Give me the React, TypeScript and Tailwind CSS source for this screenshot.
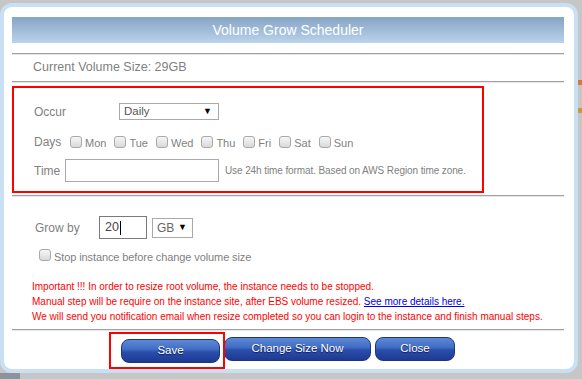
import React from "react";

const days = ["Mon", "Tue", "Wed", "Thu", "Fri", "Sat", "Sun"];

const notes = [
  "Important !!! In order to resize root volume, the instance needs to be stopped.",
  "Manual step will be require on the instance site, after EBS volume resized.",
  "We will send you notification email when resize completed so you can login to the instance and finish manual steps.",
];

function Check() {
  return (
    <span className="inline-block h-[12px] w-[12px] shrink-0 rounded-[3px] border border-[#a9a9a9] bg-linear-to-b from-[#f6f6f6] to-[#d9d9d9]" />
  );
}

function Rule() {
  return <div className="h-px bg-[#a2a2a2] shadow-[0_1px_0_#e6e6e6]" />;
}

function BlueButton({ label, width }: { label: string; width: string }) {
  return (
    <button
      className={`${width} h-[24px] rounded-[8px] border border-[#1b3586] bg-[linear-gradient(to_bottom,#5e89d5_0%,#416dc4_42%,#2b4dac_55%,#1d3a92_100%)] text-[11.5px] text-white [text-shadow:0_1px_1px_#0c1d4d]`}
    >
      {label}
    </button>
  );
}

export default function App() {
  return (
    <div className="relative h-[379px] w-[582px] overflow-hidden bg-[#c6c6c6] pt-[3px] font-['Liberation_Sans',sans-serif]">
      {/* bits of the page behind the dialog */}
      <div className="absolute right-0 top-[80px] h-[5px] w-[4px] bg-[#d8773b]" />
      <div className="absolute right-0 top-[108px] h-[5px] w-[4px] bg-[#c99a3d]" />
      <div className="absolute bottom-0 left-0 h-[6px] w-[20px] bg-[#8d939b]" />

      <div className="h-[370px] w-[578px] overflow-hidden rounded-[12px] border-[4px] border-[#c9dff3] bg-white pl-[8px] pr-[10px] pt-[10px]">
        <div className="flex h-[26px] items-center justify-center bg-linear-to-b from-[#86a4c5] to-[#bbd3eb] text-[14px] text-white">
          Volume Grow Scheduler
        </div>

        <div className="mt-[10px]">
          <Rule />
        </div>
        <div className="flex h-[27px] items-center pl-[21px] text-[12.5px] text-[#7f7f7f]">
          Current Volume Size: 29GB
        </div>
        <Rule />

        <div className="mt-[4px] h-[107px] w-[472px] border-2 border-[#ff0000] pl-[20px] pt-[15px] text-[12px] text-[#7f7f7f]">
          <div className="flex h-[17px] items-center">
            <span className="w-[85px]">Occur</span>
            <div className="flex h-[17px] w-[100px] items-center justify-between border border-[#a9a9a9] pl-[4px] pr-[6px] text-[11.5px] text-[#555]">
              <span>Daily</span>
              <span className="text-[9px] text-black">▼</span>
            </div>
          </div>

          <div className="mt-[13px] flex h-[17px] items-center">
            <span className="w-[36px]">Days</span>
            <div className="flex items-center gap-[8px] text-[11px]">
              {days.map((d) => (
                <label key={d} className="flex items-center gap-[3px]">
                  <Check />
                  <span className="pt-[3px]">{d}</span>
                </label>
              ))}
            </div>
          </div>

          <div className="mt-[9px] flex h-[23px] items-center">
            <span className="w-[31px]">Time</span>
            <div className="h-[23px] w-[154px] border border-[#a9a9a9]" />
            <span className="ml-[6px] whitespace-nowrap text-[10px] tracking-[-0.1px]">
              Use 24h time format. Based on AWS Region time zone.
            </span>
          </div>
        </div>

        <div className="mt-[2px]">
          <Rule />
        </div>

        <div className="mt-[20px] flex h-[23px] items-center pl-[23px] text-[12px] text-[#7f7f7f]">
          <span className="w-[64px]">Grow by</span>
          <div className="flex h-[23px] w-[48px] items-center border border-[#7b7b7b] pl-[5px] text-[12.5px] text-[#444]">
            20<span className="ml-px h-[14px] w-px bg-black" />
          </div>
          <div className="ml-[5px] flex h-[20px] w-[41px] items-center justify-between border border-[#a9a9a9] pl-[4px] pr-[5px] text-[#666]">
            <span>GB</span>
            <span className="text-[9px] text-black">▼</span>
          </div>
        </div>

        <label className="mt-[9px] flex h-[14px] items-center gap-[3px] pl-[27px] text-[11px] tracking-[-0.1px] text-[#7f7f7f]">
          <Check />
          <span className="pt-[4px]">Stop instance before change volume size</span>
        </label>

        <div className="mt-[17px] whitespace-nowrap pl-[20px] text-[10px] leading-[15px] text-[#ff0000]">
          <div>{notes[0]}</div>
          <div>
            {notes[1]}{" "}
            <a className="text-[#0000ee] underline" href="#">
              See more details here.
            </a>
          </div>
          <div>{notes[2]}</div>
        </div>

        <div className="mt-[5px]">
          <Rule />
        </div>

        <div className="relative mt-[7px] flex justify-center gap-[4px]">
          <div className="relative">
            <BlueButton label="Save" width="w-[99px]" />
            <div className="pointer-events-none absolute -bottom-[6px] -left-[12px] -right-[5px] -top-[5px] border-2 border-[#ff0000]" />
          </div>
          <BlueButton label="Change Size Now" width="w-[147px]" />
          <BlueButton label="Close" width="w-[80px]" />
        </div>
      </div>
    </div>
  );
}
